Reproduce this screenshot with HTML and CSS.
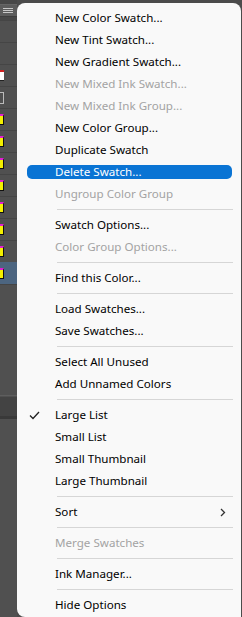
FILE: index.html
```html
<!DOCTYPE html>
<html lang="en">
<head>
  <meta charset="UTF-8" />
  <title>Swatches menu</title>
  <link rel="stylesheet" href="styles.css">
</head>
<body>
  <div class="panel">
    <div class="panel-top"><span class="burger"></span></div>
    <div class="rows">
      <div class="row"></div>
      <div class="row"></div>
      <div class="row"><span class="sw none"></span></div>
      <div class="row"><span class="sw reg"></span></div>
      <div class="row"><span class="sw yel"></span></div>
      <div class="row"><span class="sw yel"></span></div>
      <div class="row"><span class="sw yel"></span></div>
      <div class="row"><span class="sw yel"></span></div>
      <div class="row"><span class="sw yel"></span></div>
      <div class="row"><span class="sw yel"></span></div>
      <div class="row"><span class="sw yel"></span></div>
      <div class="row sel"><span class="sw yel"></span></div>
      <div class="row tall"></div>
    </div>
    <div class="band"></div>
  </div>

  <div class="menu">
    <div class="item">New Color Swatch...</div>
    <div class="item">New Tint Swatch...</div>
    <div class="item">New Gradient Swatch...</div>
    <div class="item off">New Mixed Ink Swatch...</div>
    <div class="item off">New Mixed Ink Group...</div>
    <div class="item">New Color Group...</div>
    <div class="item">Duplicate Swatch</div>
    <div class="item hot">Delete Swatch...</div>
    <div class="item off">Ungroup Color Group</div>
    <div class="sep"></div>
    <div class="item">Swatch Options...</div>
    <div class="item off">Color Group Options...</div>
    <div class="sep"></div>
    <div class="item">Find this Color...</div>
    <div class="sep"></div>
    <div class="item">Load Swatches...</div>
    <div class="item">Save Swatches...</div>
    <div class="sep"></div>
    <div class="item">Select All Unused</div>
    <div class="item">Add Unnamed Colors</div>
    <div class="sep"></div>
    <div class="item checked">
      <svg class="check" width="11" height="9" viewBox="0 0 11 9"><path d="M1 4.5 L4 7.5 L10 1" fill="none" stroke="#222" stroke-width="1.3"/></svg>
      Large List
    </div>
    <div class="item">Small List</div>
    <div class="item">Small Thumbnail</div>
    <div class="item">Large Thumbnail</div>
    <div class="sep"></div>
    <div class="item sub">Sort
      <svg class="arrow" width="6" height="9" viewBox="0 0 6 9"><path d="M1 1 L4.5 4.5 L1 8" fill="none" stroke="#333" stroke-width="1.3"/></svg>
    </div>
    <div class="sep"></div>
    <div class="item off">Merge Swatches</div>
    <div class="sep"></div>
    <div class="item">Ink Manager...</div>
    <div class="sep"></div>
    <div class="item">Hide Options</div>
  </div>
</body>
</html>
```

FILE: styles.css
```css
* {
  margin: 0;
  padding: 0;
  box-sizing: border-box;
}
body {
  width: 242px;
  height: 617px;
  overflow: hidden;
  display: flex;
  background: #4b4b4b;
  font-family: 'Noto Sans', sans-serif;
  font-size: 11.6px;
}
.panel {
  width: 17px;
  flex: none;
  display: flex;
  flex-direction: column;
  background: #505050;
}
.panel-top {
  height: 20px;
  padding-top: 4px;
  background: #474747;
}
.burger {
  display: block;
  width: 17px;
  height: 13px;
  background: #5c5c5c;
  border-top: 1px solid #666;
  border-bottom: 1px solid #3e3e3e;
  position: relative;
}
.burger::after {
  content: "";
  position: absolute;
  left: 3px;
  top: 3px;
  width: 10px;
  height: 1px;
  background: #c8c8c8;
  box-shadow: 0 2px 0 #c8c8c8, 0 4px 0 #c8c8c8;
}
.rows {
  display: flex;
  flex-direction: column;
}
.row {
  height: 22px;
  border-top: 1px solid #454545;
  display: flex;
  align-items: center;
}
.row.sel {
  background: #4c6580;
  border-top-color: #4c6580;
}
.row.tall {
  height: 112px;
  border-bottom: 1px solid #5e5e5e;
}
.band {
  height: 23px;
  border-top: 1px solid #505050;
  border-bottom: 3px solid #393939;
  background: #434343;
}
.sw {
  display: block;
  width: 4px;
  height: 11px;
}
.sw.none {
  background: #fff;
  border-top: 2px solid #d02020;
  border-bottom: 1px solid #222;
}
.sw.reg {
  width: 4px;
  border: 1px solid #bbb;
  border-left: none;
  background: #505050;
  height: 12px;
}
.sw.yel {
  background: #f5f000;
  border-top: 2px solid #e020d0;
  border-bottom: 1px solid #111;
  border-right: 1px solid #111;
}
.menu {
  flex: 1;
  margin-top: 3px;
  margin-right: 1px;
  background: #f9f9f9;
  border-radius: 8px 8px 0 8px;
  padding-top: 4px;
}
.item {
  height: 22px;
  line-height: 22px;
  padding-left: 38px;
  color: #000;
  position: relative;
  white-space: nowrap;
}
.item.off {
  color: #a3a3a3;
}
.item.hot {
  color: #fff;
  isolation: isolate;
}
.item.hot::before {
  content: "";
  position: absolute;
  left: 10px;
  right: 9px;
  top: 4px;
  height: 14px;
  background: #0a74d4;
  border-radius: 5px;
  z-index: -1;
}
.check {
  position: absolute;
  left: 12px;
  top: 7px;
}
.arrow {
  position: absolute;
  right: 15px;
  top: 7px;
}
.sep {
  height: 9px;
  margin: 0 8px 0 40px;
  border-top: 1px solid #d6d6d6;
  position: relative;
  top: 4px;
}
```
